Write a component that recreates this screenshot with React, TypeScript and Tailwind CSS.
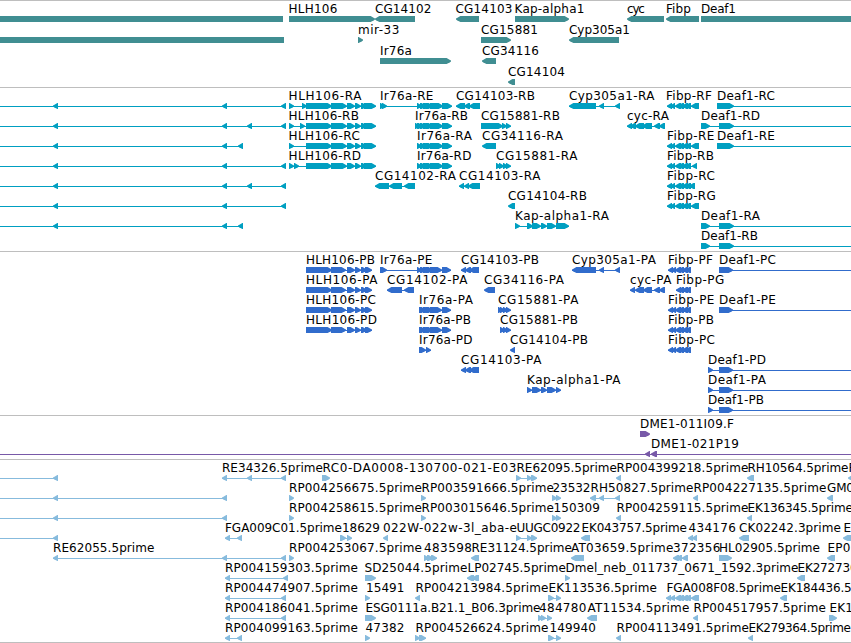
type Strand = "+" | "-" | "";
type Span = [number, number];

interface IFeature {
  row: number;
  strand: Strand;
  exons: Span[];
  label?: string;
  // left and right edge of the label
  text?: Span;
  // connector line, defaults to the first..last exon
  line?: Span;
}

interface ITrack {
  name: string;
  height: number;
  rowHeight: number;
  fill: string;
  features: IFeature[];
}

const WIDTH = 851;
const TIP = 5;

// "289-294 302-307" -> [[289, 294], [302, 307]]
const spans = (value: string): Span[] =>
  value.split(" ").map((part) => part.split("-").map(Number) as Span);

const f = (
  row: number,
  label: string,
  from: number,
  to: number,
  strand: Strand,
  exons: string,
  line?: Span
): IFeature => ({ row, label, text: [from, to], strand, exons: spans(exons), line });

const bare = (row: number, strand: Strand, exons: string, line?: Span): IFeature => ({
  row,
  strand,
  exons: spans(exons),
  line,
});

const HLH_R = "306-332 331-347 347-355 355-361 361-367 364-376";
const HLH_P = "306-332 331-346 347-355 355-361 361-367 365-372";
const IR_R = "417-422 420-426 423-430 426-433 430-443 442-452";
const IR_P = "419-426 423-430 426-433 430-442 442-451";
const FIBP_R = "667-672 670-675 675-681 678-684 682-688 685-691";
const FIBP_P = "668-673 671-676 675-681 678-684 682-688 685-691";

const genes: IFeature[] = [
  bare(0, "", "0-283"),
  f(0, "HLH106", 289, 337, "+", "289-375"),
  f(0, "CG14102", 375.5, 431, "-", "375-415"),
  f(0, "CG14103", 456, 512, "-", "456-479"),
  f(0, "Kap-alpha1", 515, 584, "+", "515-569"),
  f(0, "cyc", 627.5, 644.5, "-", "627-664"),
  f(0, "Fibp", 666.5, 690.5, "-", "666-699"),
  f(0, "Deaf1", 701.5, 735.5, "", "701-851"),
  bare(1, "", "0-284"),
  f(1, "mir-33", 358.5, 399, "+", "358-363"),
  f(1, "CG15881", 481.5, 537.5, "+", "481-511"),
  f(1, "Cyp305a1", 569.5, 629.5, "-", "569-619"),
  f(2, "Ir76a", 380.5, 411.5, "+", "380-451"),
  f(2, "CG34116", 482.5, 538.5, "-", "482-496"),
  f(3, "CG14104", 508.5, 564.5, "-", "508-515"),
];

const transcripts: IFeature[] = [
  bare(0, "-", "53-58 222-227 281-286", [0, 286]),
  bare(1, "-", "53-58 222-227 247-252 281-286", [0, 286]),
  bare(2, "-", "53-58 222-227 238-243", [0, 243]),
  bare(3, "-", "53-58 222-227 281-286", [0, 286]),
  bare(4, "-", "53-58 222-227 247-252 281-286", [0, 286]),
  bare(5, "-", "53-58 222-227 281-286", [0, 286]),
  bare(6, "-", "53-58 222-227 238-243", [0, 243]),
  f(0, "HLH106-RA", 289, 361, "+", "289-294 302-307 " + HLH_R),
  f(1, "HLH106-RB", 289, 358.5, "+", "289-294 300-305 " + HLH_R),
  f(2, "HLH106-RC", 289, 359.5, "+", "289-294 " + HLH_R),
  f(3, "HLH106-RD", 289, 360.5, "+", "289-294 294-299 " + HLH_R),
  f(0, "Ir76a-RE", 380.5, 433, "+", "380-385 382-387 " + IR_R),
  f(1, "Ir76a-RB", 415.5, 467.5, "+", "415-420 418-423 " + IR_R),
  f(2, "Ir76a-RA", 417.5, 471.5, "+", IR_R),
  f(3, "Ir76a-RD", 417.5, 471, "+", IR_R),
  f(0, "CG14103-RB", 456.5, 534.5, "-", "456-465 464-470 469-480"),
  f(4, "CG14103-RA", 459.5, 540, "-", "459-464 464-469 468-480"),
  f(4, "CG14102-RA", 375.5, 455.5, "-", "375-389 389-402 404-415"),
  f(0, "Cyp305a1-RA", 569.5, 654, "-", "569-596 599-604 615-620"),
  f(1, "CG15881-RB", 481.5, 559.5, "+", "481-503 502-507 506-511"),
  f(2, "CG34116-RA", 482.5, 562.5, "-", "482-496"),
  f(3, "CG15881-RA", 496.5, 577, "+", "496-501 499-504 503-508 506-511"),
  f(5, "CG14104-RB", 508.5, 586.5, "-", "508-515"),
  f(6, "Kap-alpha1-RA", 515.5, 608.5, "+", "515-520 527-533 532-541 541-547 547-556 556-569"),
  f(1, "cyc-RA", 627.5, 668.5, "-", "627-632 630-636 635-644 642-652 654-660 659-665"),
  f(0, "Fibp-RF", 666.5, 711.5, "-", FIBP_R + " 691-699"),
  f(2, "Fibp-RE", 667.5, 714, "-", FIBP_R + " 691-699"),
  f(3, "Fibp-RB", 667.5, 713.5, "-", FIBP_R + " 692-697"),
  f(4, "Fibp-RC", 667.5, 714.5, "-", FIBP_R + " 689-695"),
  f(5, "Fibp-RG", 667.5, 715.5, "-", FIBP_R + " 691-699"),
  f(0, "Deaf1-RC", 717.5, 774.5, "+", "717-734", [717, WIDTH]),
  f(1, "Deaf1-RD", 701.5, 759.5, "+", "701-710 719-734", [701, WIDTH]),
  f(2, "Deaf1-RE", 717.5, 774.5, "+", "717-734", [717, WIDTH]),
  f(6, "Deaf1-RA", 701.5, 759.5, "+", "701-710 719-734", [701, WIDTH]),
  f(7, "Deaf1-RB", 701.5, 757.5, "+", "701-710 719-734", [701, WIDTH]),
];

const proteins: IFeature[] = [
  f(0, "HLH106-PB", 306.5, 374.5, "+", HLH_P),
  f(1, "HLH106-PA", 306.5, 377, "+", HLH_P),
  f(2, "HLH106-PC", 306.5, 375.5, "+", HLH_P),
  f(3, "HLH106-PD", 306.5, 376.5, "+", HLH_P),
  f(0, "Ir76a-PE", 380.5, 432, "+", "380-387 417-422 420-426 423-430 426-433 430-442 442-451"),
  f(1, "CG14102-PA", 387.5, 467, "-", "387-402 404-414"),
  f(2, "Ir76a-PA", 419.5, 472.5, "+", IR_P),
  f(3, "Ir76a-PB", 419.5, 470.5, "+", IR_P),
  f(4, "Ir76a-PD", 419.5, 472, "+", "419-426 426-431"),
  f(0, "CG14103-PB", 461.5, 538.5, "-", "461-466 465-471 469-479"),
  f(5, "CG14103-PA", 461.5, 541, "-", "461-466 465-471 469-479"),
  f(1, "CG34116-PA", 484.5, 563.5, "-", "484-495"),
  f(2, "CG15881-PA", 498.5, 578, "+", "498-503 500-505 503-508 506-511"),
  f(3, "CG15881-PB", 500.5, 577.5, "+", "500-505 503-508 506-511"),
  f(4, "CG14104-PB", 510.5, 587.5, "-", "510-515"),
  f(6, "Kap-alpha1-PA", 527.5, 620, "+", "527-532 532-541 541-547 547-556 556-561"),
  f(0, "Cyp305a1-PA", 572.5, 655.5, "-", "572-596 599-604 615-620"),
  f(1, "cyc-PA", 630.5, 671, "-", "630-635 635-644 643-652 654-660 659-665"),
  f(0, "Fibp-PF", 668.5, 712.5, "-", FIBP_P),
  f(1, "Fibp-PG", 676.5, 724, "-", "676-681 678-684 682-688 685-691"),
  f(2, "Fibp-PE", 668.5, 714, "-", FIBP_P),
  f(3, "Fibp-PB", 668.5, 713.5, "-", FIBP_P),
  f(4, "Fibp-PC", 668.5, 714.5, "-", FIBP_P),
  f(0, "Deaf1-PC", 719.5, 775.5, "+", "719-733", [719, WIDTH]),
  f(2, "Deaf1-PE", 719.5, 775.5, "+", "719-733", [719, WIDTH]),
  f(5, "Deaf1-PD", 708.5, 765.5, "+", "708-713 719-733", [708, WIDTH]),
  f(6, "Deaf1-PA", 708.5, 765.5, "+", "708-713 719-733", [708, WIDTH]),
  f(7, "Deaf1-PB", 708.5, 763.5, "+", "708-713 719-733", [708, WIDTH]),
];

const bacs: IFeature[] = [
  f(0, "DME1-011I09.F", 640.5, 733.5, "+", "640-650"),
  f(1, "DME1-021P19", 651.5, 738.5, "-", "645-650 651-657", [0, WIDTH]),
];

const ests: IFeature[] = [
  bare(0, "-", "53-58", [0, 58]),
  f(0, "RE34326.5prime", 222.5, 322.5, "-", "222-227 247-252 281-286"),
  f(0, "RC0-DA0008-130700-021-E03", 323, 516, "+", "322-330"),
  f(0, "RE62095.5prime", 517, 616.5, "+", "516-521 527-532 531-537"),
  f(0, "RP004399218.5prime", 617, 748, "-", "616-621"),
  f(0, "RH10564.5prime", 748, 848, "-", "747-754"),
  f(0, "RP", 849, 863, "-", "848-856"),

  bare(1, "-", "53-58 222-227", [0, 227]),
  f(1, "RP004256675.5prime", 289.5, 421.5, "+", "289-294"),
  f(1, "RP003591666.5prime", 422, 553.5, "+", "421-426"),
  f(1, "23532", 553, 590, "+", "552-557 556-561"),
  f(1, "RH50827.5prime", 591, 693, "-", "590-596 599-604 615-620"),
  f(1, "RP004227135.5prime", 694, 826, "-", "693-698"),
  f(1, "GM03", 827.5, 861, "-", "827-833"),

  bare(2, "-", "53-58 222-227", [0, 227]),
  f(2, "RP004258615.5prime", 289.5, 421.5, "+", "289-294"),
  f(2, "RP003015646.5prime", 422, 553.5, "+", "421-426"),
  f(2, "150309", 554, 599.5, "+", "552-557 556-561"),
  f(2, "RP004259115.5prime", 617, 748, "-", "616-621"),
  f(2, "EK136345.5prime", 748, 852.5, "-", "747-752"),

  bare(3, "-", "53-58", [0, 58]),
  f(3, "FGA009C01.5prime", 225.5, 341.5, "-", "225-230 237-242"),
  f(3, "18629", 342.5, 379.5, "+", "340-346 347-352"),
  f(3, "022W-022w-3l_aba-e", 383.5, 516.5, "-", "383-388"),
  f(3, "UUGC0922", 517, 580, "+", "516-521 527-532 531-537"),
  f(3, "EK043757.5prime", 582, 686.5, "-", "581-590"),
  f(3, "434176", 689, 735.5, "-", "688-693 692-697"),
  f(3, "CK02242.3prime", 739.5, 840.5, "-", "739-749"),
  f(3, "EK", 844, 859, "-", "843-853"),

  f(4, "RE62055.5prime", 53.5, 154, "-", "53-58 222-227 281-286"),
  f(4, "RP004253067.5prime", 289.5, 421.5, "+", "289-294"),
  f(4, "483598", 424.5, 471.5, "+", "424-429 427-433 431-437"),
  f(4, "RE31124.5prime", 472, 571.5, "-", "471-479"),
  f(4, "AT03659.5prime", 571.5, 673, "-", "571-584"),
  f(4, "372356", 673.5, 720, "-", "673-679 676-682 682-688"),
  f(4, "HL02905.5prime", 719.5, 819.5, "+", "719-732"),
  f(4, "EP07", 828, 858, "-", "827-835"),

  f(5, "RP004159303.5prime", 225.5, 357.5, "-", "225-230 283-288"),
  f(5, "SD25044.5prime", 365, 467, "+", "365-376"),
  f(5, "LP02745.5prime", 468, 565.5, "-", "467-474 472-479"),
  f(5, "Dmel_neb_011737_0671_1592.3prime", 566, 798, "+", "565-570"),
  f(5, "EK272730.5prime", 798, 902.5, "-", "797-805"),

  f(6, "RP004474907.5prime", 225.5, 357.5, "-", "225-230 281-286"),
  f(6, "15491", 366.5, 404, "+", "365-370"),
  f(6, "RP004213984.5prime", 416, 548, "-", "415-420"),
  f(6, "EK113536.5prime", 549, 656.5, "+", "548-554 556-561"),
  f(6, "FGA008F08.5prime", 667, 780.5, "-", "666-671 670-675 675-681 678-684 682-688 685-691 691-699"),
  f(6, "EK184436.5prime", 781, 885.5, "-", "780-787"),

  f(7, "RP004186041.5prime", 225.5, 357.5, "-", "225-230 281-286"),
  f(7, "ESG0111a.B21.1_B06.3prime", 366, 540, "+", "365-376"),
  f(7, "484780", 539.5, 586, "+", "538-543 541-546 547-552"),
  f(7, "AT11534.5prime", 588, 689, "-", "587-597"),
  f(7, "RP004517957.5prime", 694, 825.5, "-", "693-698"),
  f(7, "EK1265", 830, 876, "+", "829-837"),

  f(8, "RP004099163.5prime", 225.5, 357.5, "-", "225-230 237-242"),
  f(8, "47382", 366, 404, "+", "365-370"),
  f(8, "RP004526624.5prime", 416, 548, "+", "415-420 419-426"),
  f(8, "149940", 550, 595.5, "+", "548-554 556-561"),
  f(8, "RP004113491.5prime", 617, 748.5, "-", "616-621"),
  f(8, "EK279364.5prime", 749, 850.5, "-", "748-753"),
];

const tracks: ITrack[] = [
  { name: "genes", height: 86, rowHeight: 21, fill: "fill-[#408e92]", features: genes },
  { name: "transcripts", height: 163, rowHeight: 20, fill: "fill-[#009fc1]", features: transcripts },
  { name: "proteins", height: 163, rowHeight: 20, fill: "fill-[#316ccc]", features: proteins },
  { name: "bacs", height: 43, rowHeight: 20, fill: "fill-[#7859a8]", features: bacs },
  { name: "ests", height: 182, rowHeight: 20, fill: "fill-[#87bbdd]", features: ests },
];

// box with a slightly rounded arrow head on the strand's side
function exonPoints([start, end]: Span, strand: Strand, y: number) {
  if (strand === "") {
    return `${start},${y} ${end},${y} ${end},${y + 6} ${start},${y + 6}`;
  }
  const tip = Math.min(TIP, end - start);
  const dir = strand === "+" ? 1 : -1;
  const head = strand === "+" ? end : start;
  const tail = strand === "+" ? start : end;
  const neck = head - dir * (tip - 0.6);
  const nose = head - dir;
  return [
    [tail, y],
    [neck, y],
    [nose, y + 2],
    [head, y + 2.6],
    [head, y + 3.6],
    [nose, y + 4.2],
    [neck, y + 6],
    [tail, y + 6],
  ].join(" ");
}

function Feature({ feature, top }: { feature: IFeature; top: number }) {
  const { exons, strand, label, text } = feature;
  const line = feature.line ?? [exons[0][0], exons[exons.length - 1][1]];
  const hasLine = exons.length > 1 || feature.line;

  return (
    <g>
      {hasLine && <rect x={line[0]} y={top + 18} width={line[1] - line[0]} height={1} />}
      {exons.map((exon, i) => (
        <polygon key={i} points={exonPoints(exon, strand, top + 15)} />
      ))}
      {label && text && (
        <text
          x={text[0] - 0.5}
          y={top + 12}
          textLength={text[1] - text[0] + 0.9}
          className="fill-black text-[12px]"
        >
          {label}
        </text>
      )}
    </g>
  );
}

function Track({ track }: { track: ITrack }) {
  return (
    <section className="border-t border-[#bebebe]">
      <svg width={WIDTH} height={track.height} className={`block ${track.fill}`}>
        {track.features.map((feature, i) => (
          <Feature key={i} feature={feature} top={feature.row * track.rowHeight} />
        ))}
      </svg>
    </section>
  );
}

export default function App() {
  return (
    <main className="flex h-[643px] w-[851px] flex-col overflow-hidden border-b border-[#bebebe] bg-white font-['DejaVu_Sans',sans-serif]">
      {tracks.map((track) => (
        <Track key={track.name} track={track} />
      ))}
    </main>
  );
}
